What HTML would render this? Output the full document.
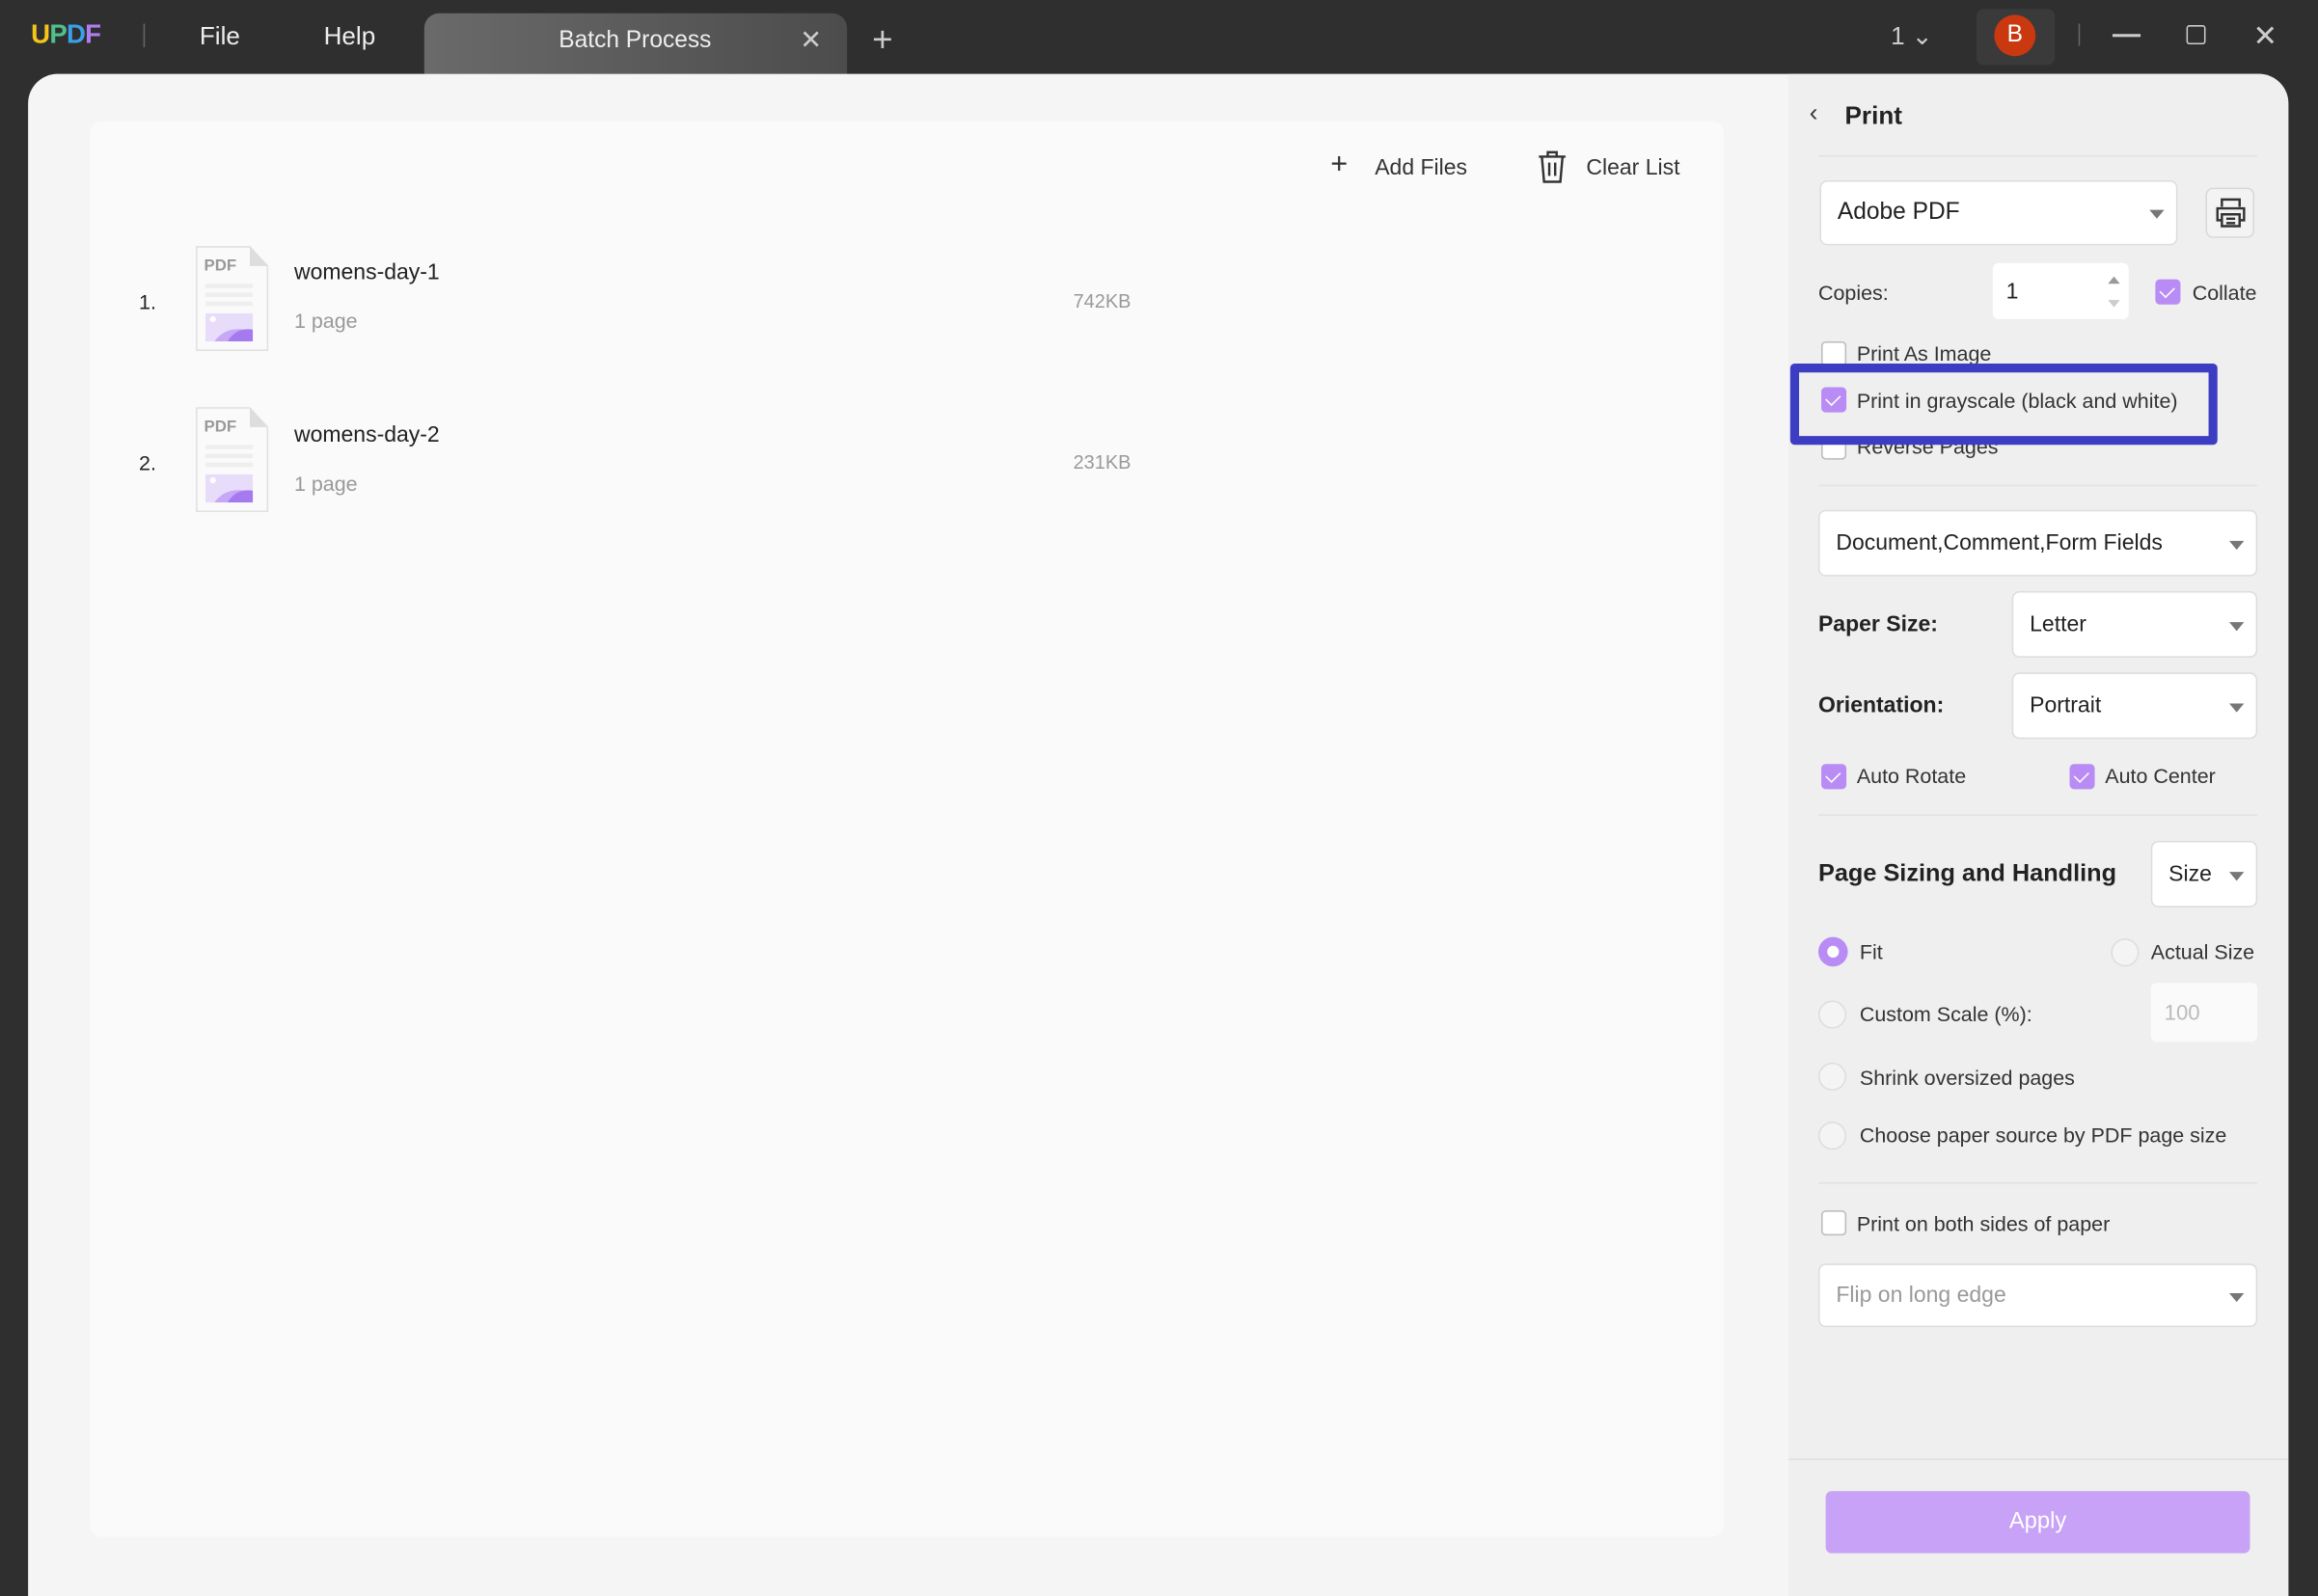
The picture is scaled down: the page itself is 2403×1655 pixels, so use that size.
<!DOCTYPE html>
<html><head><meta charset="utf-8"><style>
*{margin:0;padding:0;box-sizing:border-box}
html,body{width:2403px;height:1643px;overflow:hidden;background:#2f2f2f;font-family:"Liberation Sans",sans-serif}
#w{position:absolute;left:0;top:0;width:1568px;height:1072px;transform:scale(1.5325);transform-origin:0 0}
.a{position:absolute}
.t{color:#eee;font-size:17px}
.sel{position:absolute;background:#fff;border:1px solid #ddd;border-radius:5px;font-size:16px;color:#222;padding-left:11px;display:flex;align-items:center}
.sel::after{content:"";position:absolute;right:8px;top:50%;margin-top:-2px;border-left:5px solid transparent;border-right:5px solid transparent;border-top:6px solid #777}
.cb{position:absolute;width:17px;height:17px;border-radius:3px}
.on{background:#b98cf5}
.on::after{content:"";position:absolute;left:5px;top:3px;width:5px;height:8px;border:solid #fff;border-width:0 1.5px 1.5px 0;transform:rotate(45deg)}
.off{background:#fff;border:1px solid #bbb}
.lb{position:absolute;font-size:14px;color:#333}
.rd{position:absolute;width:19px;height:19px;border-radius:50%;background:#f4f4f4;border:1px solid #ddd}
.hr{position:absolute;left:1230px;width:297px;height:1px;background:#e2e2e2}
.b{font-weight:bold;font-size:16px;color:#222}
</style></head><body><div id="w">
<div class="a" style="left:21px;top:13px;font-weight:bold;font-size:18px;letter-spacing:-0.5px"><span style="color:#f5c518">U</span><span style="color:#4fc08d">P</span><span style="color:#3aa0e8">D</span><span style="color:#b07cf0">F</span></div>
<div class="a" style="left:97px;top:16px;width:1px;height:16px;background:#666"></div>
<div class="a t" style="left:135px;top:15px">File</div>
<div class="a t" style="left:219px;top:15px">Help</div>
<div class="a" style="left:287px;top:9px;width:286px;height:41px;border-radius:10px 10px 0 0;background:linear-gradient(90deg,#6a6a6a,#4c4c4c)"></div>
<div class="a t" style="left:378px;top:19px;font-size:16px">Batch Process</div>
<div class="a t" style="left:541px;top:17px;font-size:18px;color:#ccc">✕</div>
<div class="a t" style="left:590px;top:14px;font-size:24px;color:#ccc;font-weight:300">+</div>
<div class="a t" style="left:1279px;top:15px;color:#ccc">1 ⌄</div>
<div class="a" style="left:1337px;top:6px;width:53px;height:38px;background:#3a3a3a;border-radius:5px"></div>
<div class="a" style="left:1349px;top:10px;width:28px;height:28px;border-radius:50%;background:#c9380f;color:#fff;font-size:16px;text-align:center;line-height:28px">B</div>
<div class="a" style="left:1406px;top:16px;width:1px;height:15px;background:#666"></div>
<div class="a" style="left:1429px;top:23px;width:19px;height:1.5px;background:#ccc"></div>
<div class="a" style="left:1479px;top:17px;width:13px;height:13px;border:1.5px solid #ccc;border-radius:2px"></div>
<div class="a t" style="left:1524px;top:12px;font-size:20px;color:#ccc">✕</div>
<div class="a" style="left:19px;top:50px;width:1529px;height:1030px;background:#f5f5f5;border-radius:20px 20px 0 0;overflow:hidden">
 <div class="a" style="left:1191px;top:0;width:338px;height:1030px;background:#efefef"></div>
 <div class="a" style="left:1191px;top:937px;width:338px;height:1px;background:#e0e0e0"></div>
</div>
<div class="a" style="left:61px;top:82px;width:1105px;height:958px;background:#fafafa;border-radius:8px"></div>
<div class="a" style="left:900px;top:100px;font-size:20px;color:#333">+</div>
<div class="a" style="left:930px;top:105px;font-size:15px;color:#333">Add Files</div>
<svg class="a" style="left:1039px;top:101px" width="22" height="24" viewBox="0 0 22 24"><path d="M2 5h18M8 5V2h6v3M4 5l1.5 17h11L18 5M9 9v9M13 9v9" fill="none" stroke="#333" stroke-width="1.6"/></svg>
<div class="a" style="left:1073px;top:105px;font-size:15px;color:#333">Clear List</div>
<div class="a" style="left:94px;top:196px;font-size:14px;color:#222">1.</div>
<div class="a" style="left:94px;top:305px;font-size:14px;color:#222">2.</div>
<svg class="a" style="left:132px;top:166px" width="50" height="72" viewBox="0 0 50 72"><path d="M1 1h36l12 13v57H1z" fill="#fafafa" stroke="#e0e0e0"/><path d="M37 1v13h12" fill="#ddd"/><text x="6" y="17" font-size="11" font-weight="bold" fill="#999" font-family="Liberation Sans">PDF</text><rect x="7" y="26" width="32" height="3" fill="#eee"/><rect x="7" y="32" width="32" height="3" fill="#eee"/><rect x="7" y="38" width="32" height="3" fill="#eee"/><rect x="7" y="46" width="32" height="19" fill="#e8dcfb"/><circle cx="12" cy="50" r="2" fill="#fff"/><path d="M13 65c6-8 14-10 26-7v7z" fill="#c6a8f6"/><path d="M22 65c4-7 10-9 17-8v8z" fill="#a57aef"/></svg>
<svg class="a" style="left:132px;top:275px" width="50" height="72" viewBox="0 0 50 72"><path d="M1 1h36l12 13v57H1z" fill="#fafafa" stroke="#e0e0e0"/><path d="M37 1v13h12" fill="#ddd"/><text x="6" y="17" font-size="11" font-weight="bold" fill="#999" font-family="Liberation Sans">PDF</text><rect x="7" y="26" width="32" height="3" fill="#eee"/><rect x="7" y="32" width="32" height="3" fill="#eee"/><rect x="7" y="38" width="32" height="3" fill="#eee"/><rect x="7" y="46" width="32" height="19" fill="#e8dcfb"/><circle cx="12" cy="50" r="2" fill="#fff"/><path d="M13 65c6-8 14-10 26-7v7z" fill="#c6a8f6"/><path d="M22 65c4-7 10-9 17-8v8z" fill="#a57aef"/></svg>
<div class="a" style="left:199px;top:176px;font-size:15px;color:#222">womens-day-1</div>
<div class="a" style="left:199px;top:209px;font-size:14px;color:#999">1 page</div>
<div class="a" style="left:726px;top:196px;font-size:13px;color:#999">742KB</div>
<div class="a" style="left:199px;top:286px;font-size:15px;color:#222">womens-day-2</div>
<div class="a" style="left:199px;top:319px;font-size:14px;color:#999">1 page</div>
<div class="a" style="left:726px;top:305px;font-size:13px;color:#999">231KB</div>
<div class="a" style="left:1224px;top:67px;font-size:17px;color:#333">‹</div>
<div class="a b" style="left:1248px;top:69px;font-size:17px">Print</div>
<div class="hr" style="top:105px"></div>
<div class="sel" style="left:1231px;top:122px;width:242px;height:44px">Adobe PDF</div>
<div class="a" style="left:1492px;top:127px;width:33px;height:34px;border:1px solid #d8d8d8;border-radius:5px;background:#f3f3f3"></div>
<svg class="a" style="left:1497px;top:132px" width="24" height="24" viewBox="0 0 24 24" fill="none" stroke="#333" stroke-width="1.6"><path d="M6 8V3h12v5M6 17H3V9h18v8h-3M6 13h12v8H6zM9 16h6M9 19h6"/></svg>
<div class="lb" style="left:1230px;top:190px">Copies:</div>
<div class="a" style="left:1348px;top:178px;width:92px;height:38px;background:#fff;border-radius:4px"></div>
<div class="a" style="left:1357px;top:189px;font-size:15px;color:#222">1</div>
<div class="a" style="left:1426px;top:187px;border-left:4px solid transparent;border-right:4px solid transparent;border-bottom:5px solid #999"></div>
<div class="a" style="left:1426px;top:203px;border-left:4px solid transparent;border-right:4px solid transparent;border-top:5px solid #ccc"></div>
<div class="cb on" style="left:1458px;top:189px"></div><div class="lb" style="left:1483px;top:190px">Collate</div>
<div class="cb off" style="left:1232px;top:231px"></div><div class="lb" style="left:1256px;top:231px">Print As Image</div>
<div class="cb off" style="left:1232px;top:294px"></div><div class="lb" style="left:1256px;top:294px">Reverse Pages</div>
<div class="a" style="left:1211px;top:246px;width:289px;height:55px;border:6px solid #3d3dc4;background:#efefef;border-radius:3px"></div>
<div class="cb on" style="left:1232px;top:262px"></div><div class="lb" style="left:1256px;top:263px">Print in grayscale (black and white)</div>
<div class="hr" style="top:328px"></div>
<div class="sel" style="left:1230px;top:345px;width:297px;height:45px;font-size:15px">Document,Comment,Form Fields</div>
<div class="a b" style="left:1230px;top:414px;font-size:15px">Paper Size:</div>
<div class="sel" style="left:1361px;top:400px;width:166px;height:45px;font-size:15px">Letter</div>
<div class="a b" style="left:1230px;top:469px;font-size:15px">Orientation:</div>
<div class="sel" style="left:1361px;top:455px;width:166px;height:45px;font-size:15px">Portrait</div>
<div class="cb on" style="left:1232px;top:517px"></div><div class="lb" style="left:1256px;top:517px">Auto Rotate</div>
<div class="cb on" style="left:1400px;top:517px"></div><div class="lb" style="left:1424px;top:517px">Auto Center</div>
<div class="hr" style="top:551px"></div>
<div class="a b" style="left:1230px;top:582px;font-size:16.5px">Page Sizing and Handling</div>
<div class="sel" style="left:1455px;top:569px;width:72px;height:45px;font-size:15px">Size</div>
<div class="a" style="left:1230px;top:634px;width:20px;height:20px;border-radius:50%;background:#b98cf5"></div>
<div class="a" style="left:1236px;top:640px;width:8px;height:8px;border-radius:50%;background:#fff"></div>
<div class="lb" style="left:1258px;top:636px">Fit</div>
<div class="rd" style="left:1428px;top:635px"></div><div class="lb" style="left:1455px;top:636px">Actual Size</div>
<div class="rd" style="left:1230px;top:677px"></div><div class="lb" style="left:1258px;top:678px">Custom Scale (%):</div>
<div class="a" style="left:1455px;top:665px;width:72px;height:40px;background:#fafafa;border-radius:4px"></div>
<div class="a" style="left:1464px;top:678px;font-size:14.5px;color:#bbb">100</div>
<div class="rd" style="left:1230px;top:719px"></div><div class="lb" style="left:1258px;top:721px">Shrink oversized pages</div>
<div class="rd" style="left:1230px;top:759px"></div><div class="lb" style="left:1258px;top:760px">Choose paper source by PDF page size</div>
<div class="hr" style="top:800px"></div>
<div class="cb off" style="left:1232px;top:819px"></div><div class="lb" style="left:1256px;top:820px">Print on both sides of paper</div>
<div class="sel" style="left:1230px;top:855px;width:297px;height:43px;font-size:15px;color:#999">Flip on long edge</div>
<div class="a" style="left:1235px;top:1009px;width:287px;height:42px;background:#c7a2f7;border-radius:4px;color:#fff;font-size:15.5px;text-align:center;line-height:42px">Apply</div>
</div></body></html>
